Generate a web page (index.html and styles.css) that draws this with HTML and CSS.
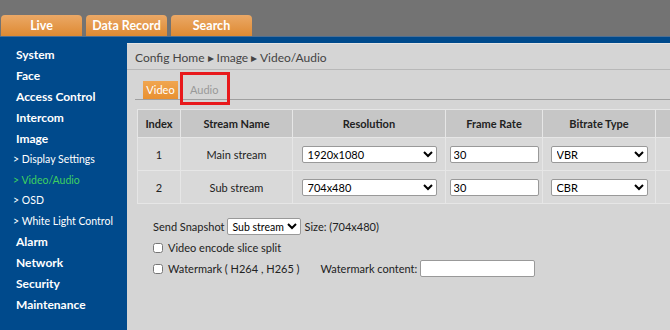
FILE: index.html
```html
<!doctype html>
<html lang="en">
	<head>
		<meta charset="UTF-8">
		<title>Video/Audio</title>
		<link rel="stylesheet" href="styles.css">
	</head>
	<body>
		<div class="topbar">
			<div class="toptab">Live</div>
			<div class="toptab">Data Record</div>
			<div class="toptab">Search</div>
		</div>
		<div class="bluebar"></div>
		<div class="main">
			<div class="menu">
				<div class="item">System</div>
				<div class="item">Face</div>
				<div class="item">Access Control</div>
				<div class="item">Intercom</div>
				<div class="item">Image</div>
				<div class="sub">&gt; Display Settings</div>
				<div class="sub actif">&gt; Video/Audio</div>
				<div class="sub">&gt; OSD</div>
				<div class="sub">&gt; White Light Control</div>
				<div class="item">Alarm</div>
				<div class="item">Network</div>
				<div class="item">Security</div>
				<div class="item">Maintenance</div>
			</div>
			<div class="contenu">
				<div class="chemin">Config Home &#9656; Image &#9656; Video/Audio</div>
				<div class="onglets">
					<div class="onglet choisi">Video</div>
					<div class="onglet encadre">Audio</div>
				</div>
				<table class="flux">
					<colgroup>
						<col class="c1">
						<col class="c2">
						<col class="c3">
						<col class="c4">
						<col class="c5">
						<col class="c6">
					</colgroup>
					<tr>
						<th>Index</th>
						<th>Stream Name</th>
						<th>Resolution</th>
						<th>Frame Rate</th>
						<th>Bitrate Type</th>
						<th></th>
					</tr>
					<tr>
						<td>1</td>
						<td>Main stream</td>
						<td><select class="choix large"><option>1920x1080</option></select></td>
						<td><input class="champ" type="text" value="30"></td>
						<td><select class="choix moyen"><option>VBR</option></select></td>
						<td></td>
					</tr>
					<tr>
						<td>2</td>
						<td>Sub stream</td>
						<td><select class="choix large"><option>704x480</option></select></td>
						<td><input class="champ" type="text" value="30"></td>
						<td><select class="choix moyen"><option>CBR</option></select></td>
						<td></td>
					</tr>
				</table>
				<div class="options">
					<div class="ligne">Send Snapshot <select class="choix petit"><option>Sub stream</option></select> Size: (704x480)</div>
					<div class="ligne"><input class="case" type="checkbox"> Video encode slice split</div>
					<div class="ligne"><input class="case" type="checkbox"> Watermark ( H264 , H265 )<span class="marque">Watermark content:</span><input class="champ texte" type="text"></div>
				</div>
			</div>
		</div>
	</body>
</html>
```
FILE: styles.css
```css
body
{
	margin: 0;
	font-family: Lato, "Liberation Sans", sans-serif;
	font-size: 11px;
	color: #222;
	background: #d5d5d5;
	overflow: hidden;
}
.topbar
{
	display: flex;
	align-items: flex-end;
	gap: 4px;
	height: 36px;
	padding-left: 1px;
	background: #737373;
}
.toptab
{
	width: 81px;
	height: 21px;
	line-height: 21px;
	text-align: center;
	color: #fff;
	font-weight: bold;
	font-size: 12.5px;
	border-radius: 4px 4px 0 0;
	background: linear-gradient(#eaa866, #df8a32);
}
.bluebar
{
	height: 6px;
	border-top: 1px solid #4d6f93;
	background: #004a8c;
}
.main
{
	display: flex;
	height: 287px;
}
.menu
{
	width: 127px;
	padding-top: 1px;
	background: #004a8c;
	color: #fff;
}
.item
{
	height: 21px;
	line-height: 21px;
	padding-left: 16px;
	font-weight: bold;
	font-size: 12px;
}
.sub
{
	height: 20.5px;
	line-height: 20.5px;
	padding-left: 13px;
	font-size: 10.5px;
}
.actif
{
	color: #3fd060;
}
.contenu
{
	flex: 1;
	overflow: hidden;
	border-top: 1px solid #e4e4e4;
	background: #d5d5d5;
}
.chemin
{
	height: 25px;
	line-height: 27px;
	padding-left: 8px;
	font-size: 12px;
	color: #444;
	border-bottom: 1px solid #b8b8b8;
}
.onglets
{
	display: flex;
	align-items: flex-end;
	gap: 8px;
	height: 29px;
	margin-left: 8px;
	padding-left: 8px;
	border-bottom: 1px solid #a0a0a0;
}
.onglet
{
	height: 18px;
	line-height: 18px;
	padding: 0 4px;
	font-size: 11px;
	color: #999;
}
.choisi
{
	width: 35px;
	padding: 0;
	text-align: center;
	color: #fff;
	background: linear-gradient(#f0a650, #e89030);
}
.encadre
{
	position: relative;
}
.encadre::after
{
	content: "";
	position: absolute;
	left: -6px;
	top: -9px;
	width: 44px;
	height: 27px;
	border: 3px solid #e8191c;
}
.flux
{
	width: 570px;
	margin: 9px 0 0 10px;
	border-collapse: collapse;
	table-layout: fixed;
}
.flux th
{
	height: 27px;
	padding: 0;
	font-weight: bold;
	background: #c6c6c6;
	border: 1px solid #e6e6e6;
}
.flux td
{
	height: 32px;
	padding: 0;
	text-align: center;
	background: #d9d9d9;
	border: 1px solid #e6e6e6;
}
.c1
{
	width: 43px;
}
.c2
{
	width: 112px;
}
.c3
{
	width: 153px;
}
.c4
{
	width: 97px;
}
.c5
{
	width: 113px;
}
.c6
{
	width: 52px;
}
.choix
{
	box-sizing: border-box;
	height: 17px;
	font-family: Lato, "Liberation Sans", sans-serif;
	font-size: 11px;
	border: 1px solid #999;
	border-radius: 2px;
	background: #fff;
	padding: 0 1px;
}
.large
{
	width: 135px;
}
.moyen
{
	width: 97px;
}
.petit
{
	width: 74px;
	padding: 0;
	font-size: 10.5px;
}
.champ
{
	box-sizing: border-box;
	width: 89px;
	height: 17px;
	padding: 0 3px;
	font-family: Lato, "Liberation Sans", sans-serif;
	font-size: 11px;
	border: 1px solid #999;
	border-radius: 2px;
}
.options
{
	padding: 12px 0 0 26px;
}
.ligne
{
	display: flex;
	align-items: center;
	gap: 3px;
	height: 21px;
}
.case
{
	width: 10px;
	height: 10px;
	margin: 0 2px 0 0;
}
.marque
{
	margin-left: 18px;
}
.texte
{
	width: 115px;
}
```
